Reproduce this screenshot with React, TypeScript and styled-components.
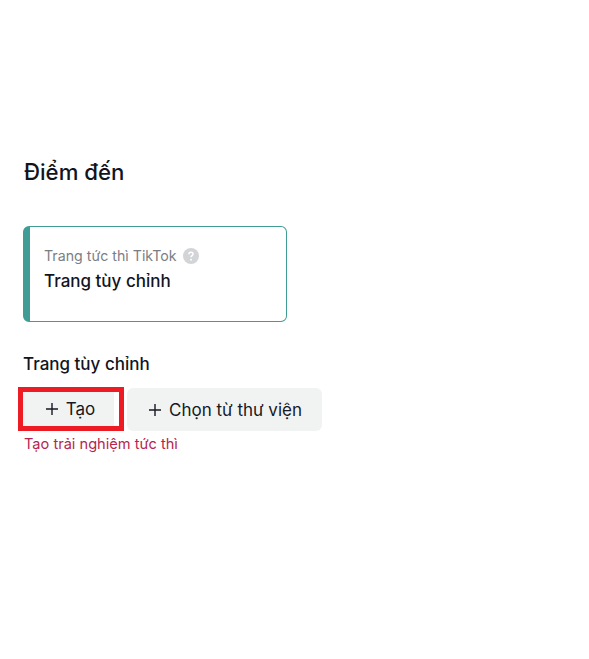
import { createGlobalStyle } from "styled-components";
import styled from "styled-components";

const GlobalStyle = createGlobalStyle`
  html, body {
    margin: 0;
    padding: 0;
    background: #fff;
    font-family: "Inter", "Liberation Sans", Arial, sans-serif;
  }
`;

const App = () => {
  return (
    <Page>
      <GlobalStyle />
      <Title>Điểm đến</Title>
      <DestinationCard>
        <CardLabel>
          Trang tức thì TikTok
          <HelpIcon viewBox="0 0 16 16">
            <circle cx="8" cy="8" r="8" fill="#d2d4d7" />
            <path
              d="M5.9 6.2c0-1.2 1-1.9 2.1-1.9s2.1.7 2.1 1.8c0 1.5-2.1 1.6-2.1 3.2"
              fill="none"
              stroke="#fff"
              strokeWidth="1.5"
            />
            <circle cx="8" cy="11.7" r="1" fill="#fff" />
          </HelpIcon>
        </CardLabel>
        <CardValue>Trang tùy chỉnh</CardValue>
      </DestinationCard>
      <SectionLabel>Trang tùy chỉnh</SectionLabel>
      <ButtonRow>
        <Highlight>
          <ActionButton $narrow>
            <Plus viewBox="0 0 14 14">
              <path d="M7 1v12M1 7h12" stroke="#161823" strokeWidth="1.4" fill="none" />
            </Plus>
            Tạo
          </ActionButton>
        </Highlight>
        <ActionButton>
          <Plus viewBox="0 0 14 14">
            <path d="M7 1v12M1 7h12" stroke="#161823" strokeWidth="1.4" fill="none" />
          </Plus>
          Chọn từ thư viện
        </ActionButton>
      </ButtonRow>
      <ErrorText>Tạo trải nghiệm tức thì</ErrorText>
    </Page>
  );
};

const Page = styled.div`
  width: 589px;
  height: 659px;
  box-sizing: border-box;
  padding: 158px 0 0 23px;
  overflow: hidden;
  background: #fff;
`;

const Title = styled.h1`
  margin: 0;
  padding-left: 1px;
  font-size: 22.2px;
  line-height: 28px;
  font-weight: 500;
  color: #12141d;
`;

const DestinationCard = styled.div`
  width: 264px;
  height: 96px;
  box-sizing: border-box;
  margin-top: 40px;
  padding: 19px 16px 0 14px;
  border: 1px solid #3f9d96;
  border-left: 7px solid #3f9d96;
  border-radius: 6px;
`;

const CardLabel = styled.div`
  display: flex;
  align-items: center;
  gap: 6px;
  font-size: 14.2px;
  line-height: 20px;
  color: #7b7d85;
`;

const HelpIcon = styled.svg`
  width: 16px;
  height: 16px;
`;

const CardValue = styled.div`
  margin-top: 4px;
  font-size: 17px;
  line-height: 22px;
  font-weight: 500;
  color: #12141d;
`;

const SectionLabel = styled.div`
  margin-top: 31px;
  font-size: 17px;
  line-height: 22px;
  font-weight: 500;
  color: #12141d;
`;

const ButtonRow = styled.div`
  display: flex;
  align-items: flex-end;
  gap: 3px;
  margin: 12px 0 0 -5px;
`;

const Highlight = styled.div`
  width: 106px;
  height: 44px;
  box-sizing: border-box;
  border: 5px solid #ed1c24;
  background: #fff;
`;

const ActionButton = styled.div<{ $narrow?: boolean }>`
  display: flex;
  align-items: center;
  justify-content: center;
  gap: 7px;
  box-sizing: border-box;
  width: ${(p) => (p.$narrow ? "91px" : "195px")};
  height: ${(p) => (p.$narrow ? "34px" : "43px")};
  padding-left: ${(p) => (p.$narrow ? "3px" : "1px")};
  background: #f1f3f3;
  border-radius: ${(p) => (p.$narrow ? "0" : "6px")};
  font-size: 17px;
  color: #161823;
`;

const Plus = styled.svg`
  width: 14px;
  height: 14px;
`;

const ErrorText = styled.div`
  margin-top: 3px;
  padding-left: 1px;
  font-size: 14.6px;
  line-height: 20px;
  color: #b5254f;
`;

export default App;
